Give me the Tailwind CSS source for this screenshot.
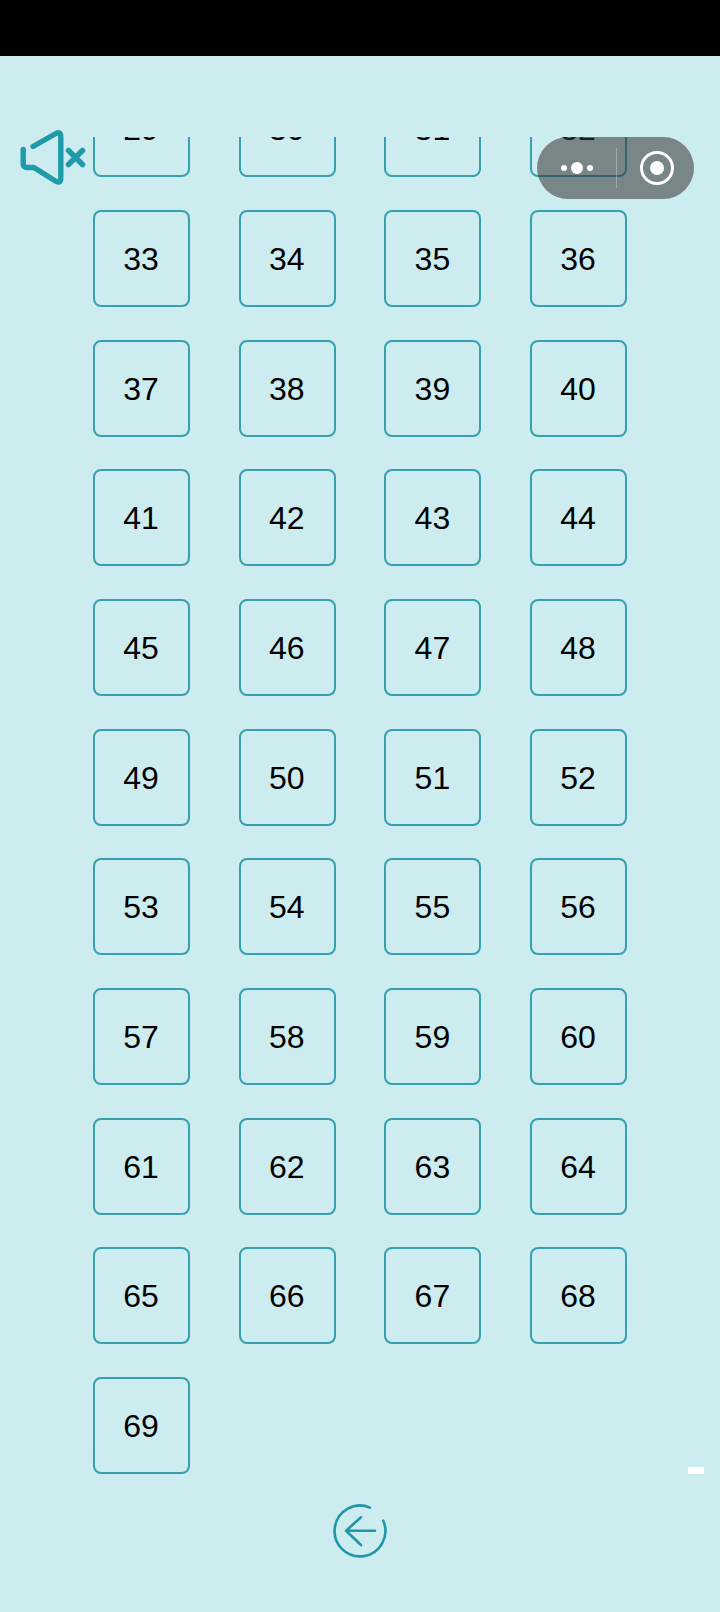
<!DOCTYPE html>
<html lang="en">
  <head>
    <meta charset="UTF-8" />
    <title>Levels</title>
    <script src="https://cdn.jsdelivr.net/npm/@tailwindcss/browser@4"></script>
  </head>
  <body class="bg-[#cdecef]">
    <div class="relative flex flex-col w-[720px] h-[1612px] overflow-hidden font-['Liberation_Sans',Arial,sans-serif] text-black">
      <div class="h-14 bg-black"></div>

      <!-- level list, scrolled -->
      <div class="mt-[81px] h-[1353px] overflow-hidden">
        <div class="-mt-[56.6px] pl-[93px] grid grid-cols-[repeat(4,97px)] gap-x-[48.7px] gap-y-[32.67px] text-[32px]">
          <div class="h-[97px] pt-px pr-px flex items-center justify-center rounded-lg border-2 border-[#36a0ad]">29</div>
          <div class="h-[97px] pt-px pr-px flex items-center justify-center rounded-lg border-2 border-[#36a0ad]">30</div>
          <div class="h-[97px] pt-px pr-px flex items-center justify-center rounded-lg border-2 border-[#36a0ad]">31</div>
          <div class="h-[97px] pt-px pr-px flex items-center justify-center rounded-lg border-2 border-[#36a0ad]">32</div>
          <div class="h-[97px] pt-px pr-px flex items-center justify-center rounded-lg border-2 border-[#36a0ad]">33</div>
          <div class="h-[97px] pt-px pr-px flex items-center justify-center rounded-lg border-2 border-[#36a0ad]">34</div>
          <div class="h-[97px] pt-px pr-px flex items-center justify-center rounded-lg border-2 border-[#36a0ad]">35</div>
          <div class="h-[97px] pt-px pr-px flex items-center justify-center rounded-lg border-2 border-[#36a0ad]">36</div>
          <div class="h-[97px] pt-px pr-px flex items-center justify-center rounded-lg border-2 border-[#36a0ad]">37</div>
          <div class="h-[97px] pt-px pr-px flex items-center justify-center rounded-lg border-2 border-[#36a0ad]">38</div>
          <div class="h-[97px] pt-px pr-px flex items-center justify-center rounded-lg border-2 border-[#36a0ad]">39</div>
          <div class="h-[97px] pt-px pr-px flex items-center justify-center rounded-lg border-2 border-[#36a0ad]">40</div>
          <div class="h-[97px] pt-px pr-px flex items-center justify-center rounded-lg border-2 border-[#36a0ad]">41</div>
          <div class="h-[97px] pt-px pr-px flex items-center justify-center rounded-lg border-2 border-[#36a0ad]">42</div>
          <div class="h-[97px] pt-px pr-px flex items-center justify-center rounded-lg border-2 border-[#36a0ad]">43</div>
          <div class="h-[97px] pt-px pr-px flex items-center justify-center rounded-lg border-2 border-[#36a0ad]">44</div>
          <div class="h-[97px] pt-px pr-px flex items-center justify-center rounded-lg border-2 border-[#36a0ad]">45</div>
          <div class="h-[97px] pt-px pr-px flex items-center justify-center rounded-lg border-2 border-[#36a0ad]">46</div>
          <div class="h-[97px] pt-px pr-px flex items-center justify-center rounded-lg border-2 border-[#36a0ad]">47</div>
          <div class="h-[97px] pt-px pr-px flex items-center justify-center rounded-lg border-2 border-[#36a0ad]">48</div>
          <div class="h-[97px] pt-px pr-px flex items-center justify-center rounded-lg border-2 border-[#36a0ad]">49</div>
          <div class="h-[97px] pt-px pr-px flex items-center justify-center rounded-lg border-2 border-[#36a0ad]">50</div>
          <div class="h-[97px] pt-px pr-px flex items-center justify-center rounded-lg border-2 border-[#36a0ad]">51</div>
          <div class="h-[97px] pt-px pr-px flex items-center justify-center rounded-lg border-2 border-[#36a0ad]">52</div>
          <div class="h-[97px] pt-px pr-px flex items-center justify-center rounded-lg border-2 border-[#36a0ad]">53</div>
          <div class="h-[97px] pt-px pr-px flex items-center justify-center rounded-lg border-2 border-[#36a0ad]">54</div>
          <div class="h-[97px] pt-px pr-px flex items-center justify-center rounded-lg border-2 border-[#36a0ad]">55</div>
          <div class="h-[97px] pt-px pr-px flex items-center justify-center rounded-lg border-2 border-[#36a0ad]">56</div>
          <div class="h-[97px] pt-px pr-px flex items-center justify-center rounded-lg border-2 border-[#36a0ad]">57</div>
          <div class="h-[97px] pt-px pr-px flex items-center justify-center rounded-lg border-2 border-[#36a0ad]">58</div>
          <div class="h-[97px] pt-px pr-px flex items-center justify-center rounded-lg border-2 border-[#36a0ad]">59</div>
          <div class="h-[97px] pt-px pr-px flex items-center justify-center rounded-lg border-2 border-[#36a0ad]">60</div>
          <div class="h-[97px] pt-px pr-px flex items-center justify-center rounded-lg border-2 border-[#36a0ad]">61</div>
          <div class="h-[97px] pt-px pr-px flex items-center justify-center rounded-lg border-2 border-[#36a0ad]">62</div>
          <div class="h-[97px] pt-px pr-px flex items-center justify-center rounded-lg border-2 border-[#36a0ad]">63</div>
          <div class="h-[97px] pt-px pr-px flex items-center justify-center rounded-lg border-2 border-[#36a0ad]">64</div>
          <div class="h-[97px] pt-px pr-px flex items-center justify-center rounded-lg border-2 border-[#36a0ad]">65</div>
          <div class="h-[97px] pt-px pr-px flex items-center justify-center rounded-lg border-2 border-[#36a0ad]">66</div>
          <div class="h-[97px] pt-px pr-px flex items-center justify-center rounded-lg border-2 border-[#36a0ad]">67</div>
          <div class="h-[97px] pt-px pr-px flex items-center justify-center rounded-lg border-2 border-[#36a0ad]">68</div>
          <div class="h-[97px] pt-px pr-px flex items-center justify-center rounded-lg border-2 border-[#36a0ad]">69</div>
        </div>
      </div>

      <!-- back button -->
      <div class="flex justify-center mt-[13px]">
        <svg class="w-[56px] h-[56px]" viewBox="0 0 56 56" fill="none" stroke="#2097a6" stroke-width="2.6" stroke-linecap="round" stroke-linejoin="round">
          <path d="M37.9 4.6 A25.4 25.4 0 1 0 51.2 17.7" />
          <path d="M43 27.7 H14 M29 14.3 L14 27.7 L29 42" />
        </svg>
      </div>

      <!-- sound toggle -->
      <svg class="absolute left-[18px] top-[127px] w-[70px] h-[60px]" viewBox="0 0 70 60" fill="none" stroke="#1f9aa9" stroke-width="5.4" stroke-linecap="round" stroke-linejoin="round">
        <path d="M15 19.5 L37 7 Q42.8 3.5 42.8 10 V51 Q42.8 57.5 36.5 53.5 L16 40.5 H9 Q5.2 40.5 5.2 37 V22.5" />
        <path d="M50.5 23.5 L64.5 37.5 M64.5 23.5 L50.5 37.5" stroke-width="5.5" />
      </svg>

      <!-- capsule menu -->
      <div class="absolute left-[537px] top-[137px] w-[157px] h-[61.5px] rounded-full bg-[#333333]/55 flex items-center">
        <div class="w-[79px] flex items-center justify-center gap-[4px]">
          <span class="w-[6px] h-[6px] rounded-full bg-white"></span>
          <span class="w-[12px] h-[12px] rounded-full bg-white"></span>
          <span class="w-[6px] h-[6px] rounded-full bg-white"></span>
        </div>
        <div class="w-px h-[40px] bg-white/30"></div>
        <div class="flex-1 flex justify-center pl-[3px]">
          <div class="w-[34px] h-[34px] rounded-full border-[3px] border-white flex items-center justify-center">
            <span class="w-[14px] h-[14px] rounded-full bg-white"></span>
          </div>
        </div>
      </div>

      <div class="absolute left-[688px] top-[1467px] w-4 h-[7px] bg-white"></div>
    </div>
  </body>
</html>
